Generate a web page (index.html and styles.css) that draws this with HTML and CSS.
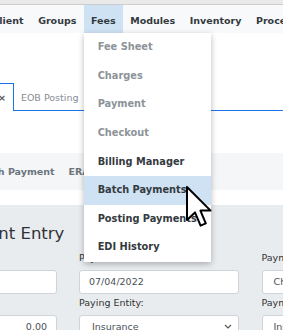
FILE: index.html
```html
<!DOCTYPE html>
<html lang="en">
<head>
    <meta charset="UTF-8">
    <meta name="viewport" content="width=device-width, initial-scale=1.0">
    <title>Batch Payments</title>
    <link rel="stylesheet" href="styles.css">
</head>
<body>
    <div class="topbar"></div>
    <nav class="menubar">
        <ul class="menu">
            <li>Client</li>
            <li>Groups</li>
            <li class="open">Fees
                <ul class="dropdown">
                    <li class="disabled">Fee Sheet</li>
                    <li class="disabled">Charges</li>
                    <li class="disabled">Payment</li>
                    <li class="disabled">Checkout</li>
                    <li>Billing Manager</li>
                    <li class="hover">Batch Payments</li>
                    <li>Posting Payments</li>
                    <li>EDI History</li>
                </ul>
            </li>
            <li>Modules</li>
            <li>Inventory</li>
            <li>Procedures</li>
        </ul>
    </nav>

    <div class="workspace">
        <div class="tabs">
            <div class="tab active"><span>Batch Payments</span><span class="close">&times;</span></div>
            <div class="tab">EOB Posting</div>
        </div>

        <div class="subnav">
            <span>Batch Payment</span>
            <span>ERA Posting</span>
        </div>

        <section class="entry">
            <h2>Payment Entry</h2>
            <div class="form-grid">
                <div class="field">
                    <label>Ref #:</label>
                    <input type="text" class="control" value="">
                </div>
                <div class="field">
                    <label>Payment Date:</label>
                    <input type="text" class="control" value="07/04/2022">
                </div>
                <div class="field">
                    <label>Payment Method:</label>
                    <div class="control select"><span>Check Payment</span></div>
                </div>
                <div class="field">
                    <label>Amt:</label>
                    <input type="text" class="control amount" value="0.00">
                </div>
                <div class="field">
                    <label>Paying Entity:</label>
                    <div class="control select pad-wide">
                        <span>Insurance</span>
                        <svg class="chevron" width="8" height="5" viewBox="0 0 8 5"><polyline points="1,1 4,4 7,1" fill="none" stroke="#555" stroke-width="1.1"/></svg>
                    </div>
                </div>
                <div class="field">
                    <label>Payment Category:</label>
                    <div class="control select"><span>Insurance Payment</span></div>
                </div>
            </div>
        </section>
    </div>

    <!-- mouse pointer sitting over the open menu -->
    <svg class="cursor" width="28" height="44" viewBox="0 0 14 22">
        <path d="M1 1 V17.5 L5 13.7 L7.8 20.3 L10.4 19.2 L7.7 12.8 H12.8 Z" fill="#fff" stroke="#000" stroke-width="1" stroke-linejoin="round"/>
    </svg>
</body>
</html>
```

FILE: styles.css
```css
body { margin: 0; overflow: hidden; background: #fff; font-family: "DejaVu Sans", Verdana, sans-serif; font-size: 9.5px; color: #333; }
ul { list-style: none; margin: 0; padding: 0; }

.topbar { height: 4px; background: #e9e9e9; border-bottom: 1px solid #cdcdcd; }

.menubar { height: 28px; background: #f8f9fa; }
.menu { display: flex; margin-left: -15px; white-space: nowrap; }
.menu > li { position: relative; padding: 4px 7.3px 0; line-height: 24px; font-weight: bold; color: #343a40; }
.menu > li.open { background: #cfe2f4; }

.dropdown { position: absolute; top: 100%; left: 0; width: 127px; background: #fff; box-shadow: 0 2px 6px rgba(0, 0, 0, 0.28); z-index: 5; }
.dropdown li { padding: 7.3px 14px; line-height: 14px; font-size: 9.8px; color: #343a40; }
.dropdown li.disabled { color: #8d9399; }
.dropdown li.hover { background: #cfe2f4; }

.tabs { display: flex; align-items: flex-end; margin: 50px 0 0 -92px; border-bottom: 1px solid #1a73e8; white-space: nowrap; }
.tab { padding: 2px 6px 0; line-height: 24px; border: 1px solid transparent; border-bottom: 0; color: #878c93; }
.tab.active { padding: 2px 7px 1px; margin-bottom: -1px; border-color: #1a73e8; background: #fff; color: #555; }
.tab .close { display: inline-block; width: 8px; margin-left: 5px; text-align: center; font-weight: bold; color: #555; }

.subnav { display: flex; margin: 42px 0 0 -33px; height: 37px; line-height: 37px; background: #f5f6f8; white-space: nowrap; }
.subnav span { padding: 0 7px; font-weight: bold; color: #6c757d; }

.entry { margin-top: 15px; padding-top: 18.6px; height: 200px; background: #e9ecef; }
.entry h2 { margin: 0 0 0 -57px; font-size: 16.5px; line-height: 20px; font-weight: normal; color: #2f3337; white-space: nowrap; }

.form-grid { display: grid; grid-template-columns: repeat(3, 160px); column-gap: 22.5px; row-gap: 2px; margin: 7px 0 0 -103.5px; }
.field label { display: block; line-height: 13px; margin-bottom: 6px; color: #333; white-space: nowrap; }
.control { display: flex; align-items: center; justify-content: space-between; box-sizing: border-box; width: 100%; height: 24px; padding: 0 9px; margin: 0; background: #fff; border: 1px solid #ced4da; border-radius: 3px; font: inherit; color: #495057; white-space: nowrap; overflow: hidden; }
.control.amount { text-align: right; padding-right: 8.5px; }
.control.select { padding-left: 11px; }
.control.pad-wide { padding-left: 12px; padding-right: 6px; }

.cursor { position: absolute; left: 185px; top: 185px; z-index: 10; }
```
